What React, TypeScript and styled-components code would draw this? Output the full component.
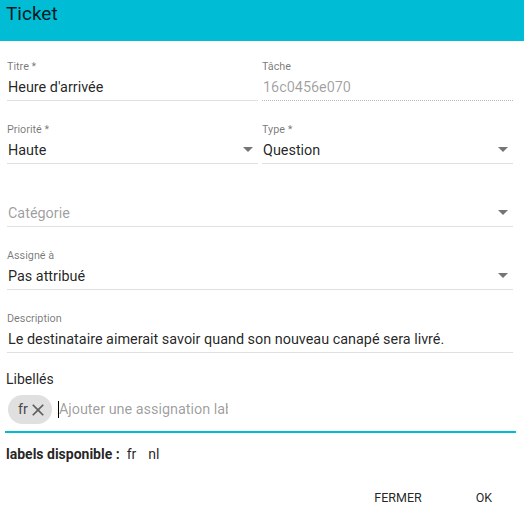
import React from "react";
import styled, { createGlobalStyle } from "styled-components";

const GlobalStyle = createGlobalStyle`
  html, body { margin: 0; padding: 0; background: #ffffff; }
  body { font-family: Roboto, "Noto Sans", "Liberation Sans", sans-serif; color: rgba(0,0,0,0.87); }
  * { box-sizing: border-box; }
`;

const Dialog = styled.div`
  width: 524px;
  height: 526px;
  display: flex;
  flex-direction: column;
  background: #fff;
  overflow: hidden;
`;

const Header = styled.div`
  height: 41px;
  flex: none;
  background: #00bcd4;
  padding: 3px 6px 0;
  font-size: 19px;
  line-height: 22px;
  font-weight: 400;
  color: rgba(0,0,0,0.87);
`;

const Content = styled.div`
  display: flex;
  flex-direction: column;
  padding: 20px 11px 0 7px;
`;

const Row = styled.div`
  display: grid;
  grid-template-columns: 1fr 1fr;
  column-gap: 4px;
`;

const Field = styled.div<{ $first?: boolean }>`
  display: flex;
  flex-direction: column;
  padding-top: ${(p) => (p.$first ? "0px" : "23px")};
  min-width: 0;
`;

const Label = styled.div`
  height: 12px;
  font-size: 10.8px;
  line-height: 12px;
  color: rgba(0,0,0,0.54);
  white-space: nowrap;
`;

const ValueRow = styled.div<{ $disabled?: boolean }>`
  display: flex;
  align-items: center;
  margin-top: 4px;
  height: 24px;
  padding-bottom: 1px;
  border-bottom: 1px ${(p) => (p.$disabled ? "dotted #b8b8b8" : "solid #e0e0e0")};
`;

const Value = styled.div<{ $tone?: "normal" | "muted" | "placeholder" }>`
  flex: 1;
  font-size: 14.4px;
  line-height: 20px;
  padding-left: 1px;
  white-space: nowrap;
  overflow: hidden;
  color: ${(p) =>
    p.$tone === "muted"
      ? "rgba(0,0,0,0.38)"
      : p.$tone === "placeholder"
      ? "rgba(0,0,0,0.4)"
      : "rgba(0,0,0,0.87)"};
`;

const Arrow = styled.svg`
  flex: none;
  width: 10px;
  height: 5px;
  margin-right: 5px;
  margin-bottom: 3px;
  fill: #757575;
`;

const ArrowDown = () => (
  <Arrow viewBox="0 0 10 5">
    <polygon points="0,0 10,0 5,5" />
  </Arrow>
);

const LabelsSection = styled.div`
  display: flex;
  flex-direction: column;
  margin: 18px -3px 0 -2px;
`;

const SectionTitle = styled.div`
  font-size: 14px;
  line-height: 16px;
  padding-left: 1px;
  color: rgba(0,0,0,0.87);
`;

const ChipInput = styled.div`
  display: flex;
  align-items: center;
  margin-top: 8px;
  padding: 0 0 7px 3px;
  border-bottom: 2px solid #00bcd4;
`;

const Chip = styled.div`
  display: flex;
  align-items: center;
  height: 29px;
  padding: 0 4px 0 10px;
  border-radius: 15px;
  background: #e0e0e0;
  font-size: 14.4px;
  color: #4a4a4a;
`;

const ChipDelete = styled.svg`
  width: 20px;
  height: 20px;
  fill: #5f5f5f;
`;

const Caret = styled.span`
  width: 1px;
  height: 17px;
  background: #000;
  margin-left: 6px;
  flex: none;
`;

const Placeholder = styled.span`
  width: 169px;
  overflow: hidden;
  white-space: nowrap;
  font-size: 14.4px;
  line-height: 20px;
  color: rgba(0,0,0,0.4);
`;

const Available = styled.div`
  display: flex;
  align-items: center;
  margin-top: 13px;
  padding-left: 1px;
  font-size: 14px;
  line-height: 16px;
  color: rgba(0,0,0,0.87);
`;

const AvailableTitle = styled.span`
  font-weight: 700;
`;

const Options = styled.span`
  display: flex;
  gap: 12px;
  margin-left: 7px;
`;

const Actions = styled.div`
  display: flex;
  justify-content: flex-end;
  gap: 22px;
  margin-top: auto;
  padding: 0 8px 11px 0;
`;

const Button = styled.button`
  min-width: 64px;
  height: 36px;
  padding: 0 8px;
  border: none;
  background: transparent;
  font-family: Roboto, "Liberation Sans", sans-serif;
  font-size: 12.5px;
  font-weight: 400;
  color: rgba(0,0,0,0.87);
  text-transform: uppercase;
  cursor: pointer;
`;

export default function App() {
  return (
    <Dialog>
      <GlobalStyle />
      <Header>Ticket</Header>
      <Content>
        <Row>
          <Field $first>
            <Label>Titre *</Label>
            <ValueRow>
              <Value>Heure d'arrivée</Value>
            </ValueRow>
          </Field>
          <Field $first>
            <Label>Tâche</Label>
            <ValueRow $disabled>
              <Value $tone="muted">16c0456e070</Value>
            </ValueRow>
          </Field>
        </Row>
        <Row>
          <Field>
            <Label>Priorité *</Label>
            <ValueRow>
              <Value>Haute</Value>
              <ArrowDown />
            </ValueRow>
          </Field>
          <Field>
            <Label>Type *</Label>
            <ValueRow>
              <Value>Question</Value>
              <ArrowDown />
            </ValueRow>
          </Field>
        </Row>
        <Field>
          <Label />
          <ValueRow>
            <Value $tone="placeholder">Catégorie</Value>
            <ArrowDown />
          </ValueRow>
        </Field>
        <Field>
          <Label>Assigné à</Label>
          <ValueRow>
            <Value>Pas attribué</Value>
            <ArrowDown />
          </ValueRow>
        </Field>
        <Field>
          <Label>Description</Label>
          <ValueRow>
            <Value>Le destinataire aimerait savoir quand son nouveau canapé sera livré.</Value>
          </ValueRow>
        </Field>
        <LabelsSection>
          <SectionTitle>Libellés</SectionTitle>
          <ChipInput>
            <Chip>
              fr
              <ChipDelete viewBox="0 0 24 24">
                <path d="M19 6.41L17.59 5 12 10.59 6.41 5 5 6.41 10.59 12 5 17.59 6.41 19 12 13.41 17.59 19 19 17.59 13.41 12z" />
              </ChipDelete>
            </Chip>
            <Caret />
            <Placeholder>Ajouter une assignation label</Placeholder>
          </ChipInput>
          <Available>
            <AvailableTitle>labels disponible :</AvailableTitle>
            <Options>
              <span>fr</span>
              <span>nl</span>
            </Options>
          </Available>
        </LabelsSection>
      </Content>
      <Actions>
        <Button>Fermer</Button>
        <Button>OK</Button>
      </Actions>
    </Dialog>
  );
}
